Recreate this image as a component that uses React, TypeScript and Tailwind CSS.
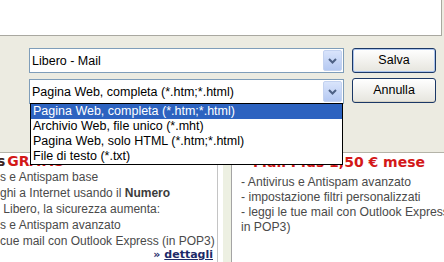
import React from "react";

function Chevron() {
  return (
    <svg width="9" height="6" viewBox="0 0 9 6">
      <path d="M1 1 L4.5 4.5 L8 1" fill="none" stroke="#4d6185" strokeWidth="2" />
    </svg>
  );
}

function Combo({ text }: { text: string }) {
  return (
    <div className="h-[25px] border border-[#7f9db9] bg-white flex items-center">
      <div className="flex-1 pl-[2px] pt-[2px] text-[12.5px] leading-[15px] text-black whitespace-nowrap overflow-hidden">
        {text}
      </div>
      <div className="w-[19px] h-[21px] mr-[1px] rounded-[2px] bg-gradient-to-b from-[#d9e4fb] to-[#b5c9f2] border border-[#c3d2f0] flex items-center justify-center">
        <Chevron />
      </div>
    </div>
  );
}

function Btn({ children, def }: { children: React.ReactNode; def?: boolean }) {
  return (
    <div
      className={
        def
          ? "h-[25px] rounded-[3px] border border-[#1b3866] bg-gradient-to-b from-white to-[#e6e5de] flex items-center justify-center text-[12.5px] text-black shadow-[inset_0_0_0_1px_#aac3ec]"
          : "h-[25px] rounded-[3px] border border-[#1b3866] bg-gradient-to-b from-white to-[#e6e5de] flex items-center justify-center text-[12.5px] text-black shadow-[inset_0_-1px_0_0_#d6d2c4]"
      }
    >
      {children}
    </div>
  );
}

export default function App() {
  const items = [
    "Pagina Web, completa (*.htm;*.html)",
    "Archivio Web, file unico (*.mht)",
    "Pagina Web, solo HTML (*.htm;*.html)",
    "File di testo (*.txt)",
  ];
  return (
    <div className="relative w-[444px] h-[262px] overflow-hidden bg-white font-['Liberation_Sans',Arial,sans-serif]">
      {/* dialog */}
      <div className="h-[153px] bg-[#ecebe1] border-b border-[#b4b3a8] flex flex-col">
        <div className="h-[36px] w-[442px] bg-white border-b border-r border-[#a9a8a0]" />
        <div className="flex pl-[29px] pt-[12px] gap-[8px]">
          <div className="flex flex-col gap-[6px] w-[315px]">
            <Combo text="Libero - Mail" />
            <Combo text="Pagina Web, completa (*.htm;*.html)" />
          </div>
          <div className="flex flex-col gap-[5px] w-[84px]">
            <Btn def>Salva</Btn>
            <Btn>Annulla</Btn>
          </div>
        </div>
      </div>

      {/* web page */}
      <div className="flex h-[109px] bg-white">
        <div className="w-[217px] overflow-hidden text-[12px] leading-[16px] text-[#4a4a4a] whitespace-nowrap">
          <div className="h-[16px] leading-[16px] -ml-[3px] font-['DejaVu_Sans',sans-serif] font-bold text-[14px]">
            <span className="text-[#3b2424]">s</span>
            <span className="ml-[2px] text-[#d31818]">GRATIS</span>
          </div>
          <div>s e Antispam base</div>
          <div>
            ghi a Internet usando il <b className="text-[#3c3c3c]">Numero</b>
          </div>
          <div>&nbsp;Libero, la sicurezza aumenta:</div>
          <div>s e Antispam avanzato</div>
          <div>cue mail con Outlook Express (in POP3)</div>
          <div className="text-right pr-[4px] leading-[12px] font-['DejaVu_Sans',sans-serif] font-bold text-[11px] text-[#1c2a68]">
            » <span className="underline">dettagli</span>
          </div>
        </div>
        <div className="flex w-[15px]">
          <div className="w-px bg-[#c4c4c4]" />
          <div className="w-[5px]" />
          <div className="w-[8px] bg-[#edf0e2]" />
          <div className="w-px bg-[#a4a4a4]" />
        </div>
        <div className="flex-1 pl-[9px] overflow-hidden whitespace-nowrap text-[12.2px] text-[#4a4a4a]">
          <div className="h-[18px] pl-[12px] leading-[18px] font-['DejaVu_Sans',sans-serif] font-bold text-[14px] text-[#d31818]">
            Mail Plus 1,50 € mese
          </div>
          <div className="mt-[4px] leading-[15px]">
            <div>- Antivirus e Antispam avanzato</div>
            <div>- impostazione filtri personalizzati</div>
            <div>- leggi le tue mail con Outlook Express (</div>
            <div>in POP3)</div>
          </div>
        </div>
      </div>

      {/* open dropdown list */}
      <div className="absolute left-[30px] top-[103px] w-[313px] border border-black bg-white text-[12.5px] leading-[15px] text-black">
        {items.map((t, i) => (
          <div
            key={t}
            className={
              i === 0
                ? "h-[15px] pl-[2px] bg-[#2d63c0] text-white whitespace-nowrap"
                : "h-[15px] pl-[2px] whitespace-nowrap"
            }
          >
            {t}
          </div>
        ))}
      </div>
    </div>
  );
}
